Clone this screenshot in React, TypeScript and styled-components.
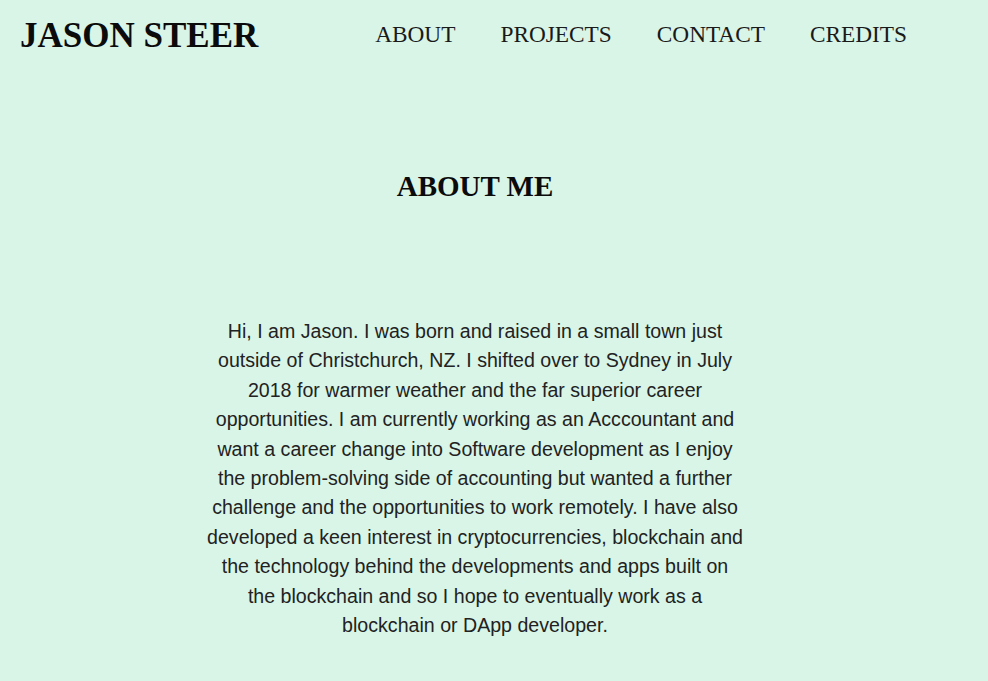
import React from "react";
import styled, { createGlobalStyle } from "styled-components";

const Global = createGlobalStyle`
  html, body { margin: 0; padding: 0; background: #d8f5e8; }
  body { font-family: "Liberation Serif", "Times New Roman", serif; color: #111; }
`;

const Page = styled.div`
  min-height: 681px;
  background: #d8f5e8;
`;

const Header = styled.header`
  display: flex;
  align-items: flex-start;
  padding: 0 81px 0 20px;
  height: 70px;
`;

const Brand = styled.h1`
  margin: 16px 0 0;
  font-size: 35px;
  line-height: 40px;
  font-weight: bold;
  color: #0b0b0b;
`;

const Nav = styled.nav`
  display: flex;
  gap: 45px;
  margin: 19px 0 0 auto;
`;

const NavLink = styled.a`
  font-size: 23.3px;
  line-height: 30px;
  color: #1a1a1a;
  text-decoration: none;
`;

const Main = styled.main`
  display: flex;
  flex-direction: column;
  align-items: center;
  padding: 0 38px 0 0;
`;

const Title = styled.h2`
  margin: 100px 0 0;
  font-size: 29px;
  font-weight: bold;
  color: #0b0b0b;
`;

const Text = styled.p`
  margin: 114px 0 0;
  width: 537px;
  text-align: center;
  font-family: "Liberation Sans", Arial, sans-serif;
  font-size: 19.6px;
  line-height: 29.4px;
  color: #222;
`;

export default function App() {
  return (
    <Page>
      <Global />
      <Header>
        <Brand>JASON STEER</Brand>
        <Nav>
          <NavLink href="#about">ABOUT</NavLink>
          <NavLink href="#projects">PROJECTS</NavLink>
          <NavLink href="#contact">CONTACT</NavLink>
          <NavLink href="#credits">CREDITS</NavLink>
        </Nav>
      </Header>
      <Main>
        <Title>ABOUT ME</Title>
        <Text>
          Hi, I am Jason. I was born and raised in a small town just outside of Christchurch, NZ. I shifted over to Sydney in July 2018 for warmer weather and the far superior career opportunities. I am currently working as an Acccountant and want a career change into Software development as I enjoy the problem-solving side of accounting but wanted a further challenge and the opportunities to work remotely. I have also developed a keen interest in cryptocurrencies, blockchain and the technology behind the developments and apps built on the blockchain and so I hope to eventually work as a blockchain or DApp developer.
        </Text>
      </Main>
    </Page>
  );
}
